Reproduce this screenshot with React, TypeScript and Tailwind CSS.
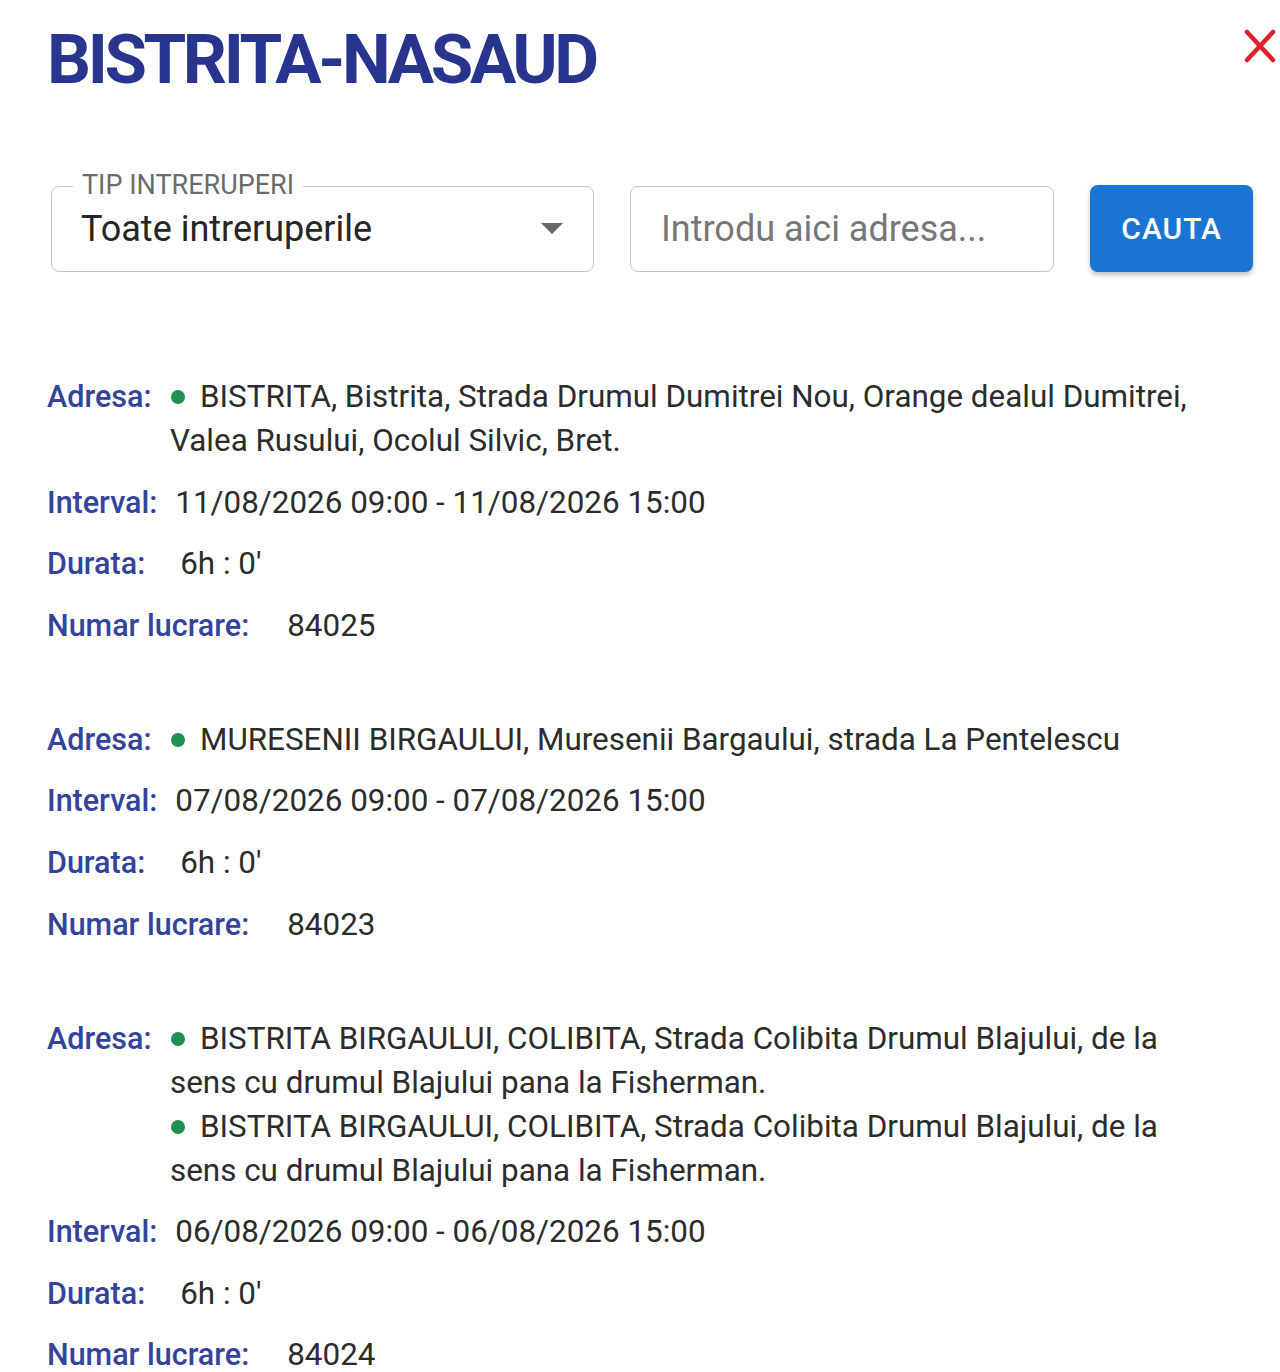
import React from 'react';

type Outage = {
  addresses: string[];
  start: string;
  end: string;
  duration: string;
  workNumber: string;
};

const outages: Outage[] = [
  {
    addresses: [
      'BISTRITA, Bistrita, Strada Drumul Dumitrei Nou, Orange dealul Dumitrei, Valea Rusului, Ocolul Silvic, Bret.',
    ],
    start: '11/08/2026 09:00',
    end: '11/08/2026 15:00',
    duration: "6h : 0'",
    workNumber: '84025',
  },
  {
    addresses: ['MURESENII BIRGAULUI, Muresenii Bargaului, strada La Pentelescu'],
    start: '07/08/2026 09:00',
    end: '07/08/2026 15:00',
    duration: "6h : 0'",
    workNumber: '84023',
  },
  {
    addresses: [
      'BISTRITA BIRGAULUI, COLIBITA, Strada Colibita Drumul Blajului, de la sens cu drumul Blajului pana la Fisherman.',
      'BISTRITA BIRGAULUI, COLIBITA, Strada Colibita Drumul Blajului, de la sens cu drumul Blajului pana la Fisherman.',
    ],
    start: '06/08/2026 09:00',
    end: '06/08/2026 15:00',
    duration: "6h : 0'",
    workNumber: '84024',
  },
];

const CloseIcon = () => (
  <svg width="32" height="34" viewBox="0 0 32 34" fill="none">
    <path d="M3 3 L29 31 M29 3 L3 31" stroke="#e0202b" strokeWidth="4.5" strokeLinecap="round" />
  </svg>
);

const Label: React.FC<{ children: React.ReactNode; className?: string }> = ({ children, className }) => (
  <span className={`text-[30.5px] font-medium text-[#34439c] shrink-0 ${className ?? ''}`}>{children}</span>
);

const OutageItem: React.FC<{ item: Outage }> = ({ item }) => (
  <div className="flex flex-col gap-[17.6px] text-[31.4px] leading-[44px] text-[#2c2c2c]">
    <div className="flex">
      <Label className="w-[123px]">Adresa:</Label>
      <div className="w-[1040px]">
        {item.addresses.map((address, i) => (
          <div key={i}>
            <span className="inline-block w-[14px] h-[14px] rounded-full bg-[#1f9150] mr-[15px] ml-px align-[3px]" />
            {address}
          </div>
        ))}
      </div>
    </div>
    <div className="flex">
      <Label>Interval:</Label>
      <span className="ml-[18px]">
        {item.start} - {item.end}
      </span>
    </div>
    <div className="flex">
      <Label>Durata:</Label>
      <span className="ml-[35px]">{item.duration}</span>
    </div>
    <div className="flex">
      <Label>Numar lucrare:</Label>
      <span className="ml-[38px]">{item.workNumber}</span>
    </div>
  </div>
);

export default function App() {
  return (
    <div className="w-[1280px] h-[1372px] overflow-hidden bg-white font-['Roboto',sans-serif] pl-[47px] pr-[27px]">
      <div className="flex items-start justify-between pt-[21px]">
        <h1 className="text-[69px] leading-[78px] font-bold tracking-[-3.4px] text-[#27358f]">BISTRITA-NASAUD</h1>
        <button className="mt-[8px] -mr-[23px]">
          <CloseIcon />
        </button>
      </div>

      <div className="flex items-center mt-[86px] ml-[4px] gap-[36px]">
        <div className="relative w-[544px] h-[86px] rounded-[8px] border border-[#c4c4c4] flex items-center pl-[29px] pr-[30px]">
          <span className="absolute -top-[18px] left-[21px] bg-white px-[9px] text-[27px] leading-[32px] text-[#6b6b6b]">
            TIP INTRERUPERI
          </span>
          <span className="flex-1 text-[36px] text-[#262626]">Toate intreruperile</span>
          <svg width="22" height="12" viewBox="0 0 22 12">
            <path d="M0 0 L22 0 L11 11 Z" fill="#666" />
          </svg>
        </div>
        <div className="w-[425px] h-[86px] rounded-[8px] border border-[#c4c4c4] flex items-center pl-[30px]">
          <span className="text-[36px] text-[#777]">Introdu aici adresa...</span>
        </div>
        <button className="w-[163px] h-[87px] rounded-[8px] bg-[#1a74d2] text-white text-[30px] font-medium tracking-[1px] shadow-[0_3px_5px_rgba(0,0,0,0.25)]">
          CAUTA
        </button>
      </div>

      <div className="flex flex-col gap-[70px] mt-[103px]">
        {outages.map(item => (
          <OutageItem key={item.workNumber} item={item} />
        ))}
      </div>
    </div>
  );
}
